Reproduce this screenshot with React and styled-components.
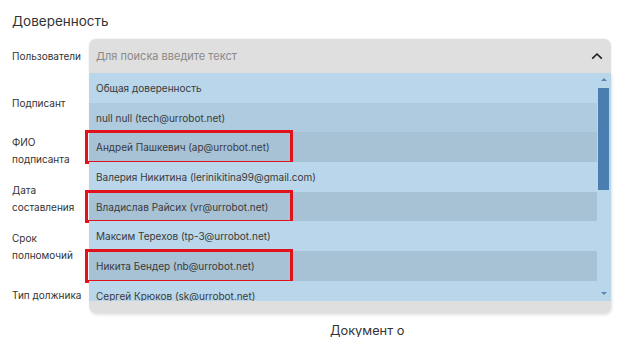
import React from "react";
import styled, { createGlobalStyle } from "styled-components";

const Global = createGlobalStyle`
  html, body { margin: 0; padding: 0; background: #fff; }
  body { font-family: Inter, "Noto Sans", Arial, sans-serif; color: #333; }
`;

const Page = styled.div`
  width: 624px;
  height: 337px;
  padding: 11px 0 0 12px;
  box-sizing: border-box;
  overflow: hidden;
`;

const Title = styled.h2`
  margin: 0 0 8px;
  font-size: 13.5px;
  line-height: 20px;
  font-weight: 400;
  color: #333;
`;

const Form = styled.div`
  display: grid;
  grid-template-columns: 77px 522px;
  grid-template-rows: 34px repeat(5, 36px) 20px;
  row-gap: 12px;
`;

const Label = styled.div`
  display: flex;
  align-items: center;
  font-size: 10px;
  line-height: 17px;
  color: #333;
  white-space: pre-line;
`;

const Field = styled.div`
  position: relative;
`;

const Caption = styled.div`
  grid-column: 2;
  padding-left: 241px;
  font-size: 12.8px;
  line-height: 20px;
  color: #333;
  margin-top: -4px;
`;

const SelectHead = styled.div`
  height: 34px;
  display: flex;
  align-items: center;
  justify-content: space-between;
  padding: 0 8px 0 7px;
  background: #dfdfdf;
  border-radius: 7px 7px 0 0;
  box-shadow: 0 0 2px rgba(0, 0, 0, 0.12);
`;

const Placeholder = styled.span`
  font-size: 11px;
  color: #8a8a8a;
`;

const Menu = styled.div`
  position: absolute;
  top: 34px;
  left: 0;
  right: 0;
  background: #dfdfdf;
  border-radius: 0 0 7px 7px;
  padding-bottom: 12px;
  box-shadow: 1px 2px 3px rgba(0, 0, 0, 0.12);
  z-index: 2;
`;

const ListBox = styled.div`
  height: 228px;
  display: flex;
  background: #b9d6ea;
  clip-path: inset(0 0 0 -10px);
`;

const Items = styled.div`
  flex: 1;
  display: flex;
  flex-direction: column;
`;

const tones = {
  normal: "#b9d6ea",
  hover: "#afcbe0",
  selected: "#a7c1d5",
};

const Row = styled.div`
  position: relative;
  flex: 0 0 29.7px;
  display: flex;
  align-items: center;
  padding-left: 7px;
  font-size: 10px;
  color: #3a3a3a;
  background: ${(p) => tones[p.$tone]};
  &::after {
    content: "";
    display: ${(p) => (p.$marked ? "block" : "none")};
    position: absolute;
    left: -4px;
    top: -2px;
    bottom: -2px;
    width: 208px;
    border: 3px solid #e0131c;
    box-sizing: border-box;
  }
`;

const Scrollbar = styled.div`
  width: 14px;
  display: flex;
  flex-direction: column;
  align-items: center;
  padding-top: 5px;
  box-sizing: border-box;
`;

const Arrow = styled.div`
  width: 0;
  height: 0;
  border-left: 3px solid transparent;
  border-right: 3px solid transparent;
  ${(p) =>
    p.$down
      ? "border-top: 3px solid #5a86b1; margin-top: auto; margin-bottom: 6px;"
      : "border-bottom: 3px solid #5a86b1;"}
`;

const Thumb = styled.div`
  width: 11px;
  height: 102px;
  margin: 7px 1px 0 0;
  background: #4a7eb0;
`;

function Chevron() {
  return (
    <svg width="12" height="8" viewBox="0 0 12 8">
      <path d="M1.2 6.6 L6 2 L10.8 6.6" fill="none" stroke="#1e1e1e" strokeWidth="1.6" />
    </svg>
  );
}

const options = [
  { text: "Общая доверенность", tone: "normal" },
  { text: "null null (tech@urrobot.net)", tone: "hover" },
  { text: "Андрей Пашкевич (ap@urrobot.net)", tone: "selected", marked: true },
  { text: "Валерия Никитина (lerinikitina99@gmail.com)", tone: "normal" },
  { text: "Владислав Райсих (vr@urrobot.net)", tone: "selected", marked: true },
  { text: "Максим Терехов (tp-3@urrobot.net)", tone: "normal" },
  { text: "Никита Бендер (nb@urrobot.net)", tone: "selected", marked: true },
  { text: "Сергей Крюков (sk@urrobot.net)", tone: "normal" },
];

const labels = [
  "Подписант",
  "ФИО\nподписанта",
  "Дата\nсоставления",
  "Срок\nполномочий",
  "Тип должника",
];

export default function App() {
  return (
    <Page>
      <Global />
      <Title>Доверенность</Title>
      <Form>
        <Label>Пользователи</Label>
        <Field>
          <SelectHead>
            <Placeholder>Для поиска введите текст</Placeholder>
            <Chevron />
          </SelectHead>
          <Menu>
            <ListBox>
              <Items>
                {options.map((o) => (
                  <Row key={o.text} $tone={o.tone} $marked={o.marked}>
                    {o.text}
                  </Row>
                ))}
              </Items>
              <Scrollbar>
                <Arrow />
                <Thumb />
                <Arrow $down />
              </Scrollbar>
            </ListBox>
          </Menu>
        </Field>
        {labels.map((l) => (
          <React.Fragment key={l}>
            <Label>{l}</Label>
            <Field />
          </React.Fragment>
        ))}
        <Caption>Документ о</Caption>
      </Form>
    </Page>
  );
}
